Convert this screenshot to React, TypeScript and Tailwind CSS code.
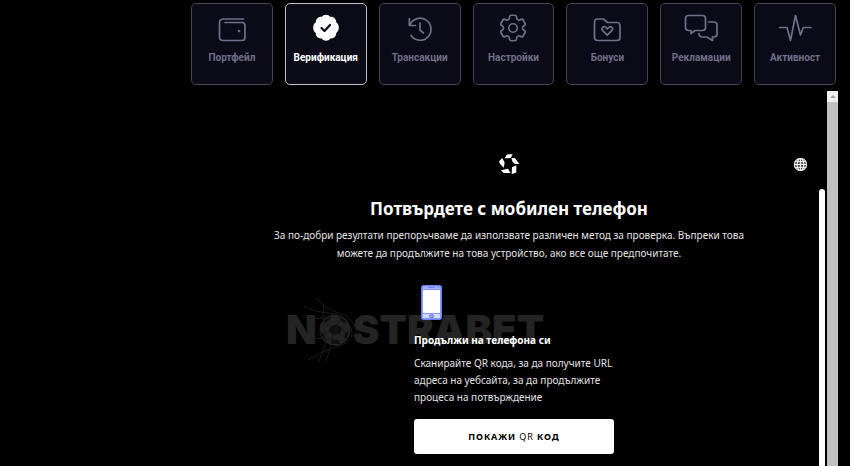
import { ReactNode } from "react";
import { clsx } from "clsx";
import { BsGlobe } from "react-icons/bs";
import { HiOutlineCog6Tooth } from "react-icons/hi2";

function StrokeIcon({ children }: { children: ReactNode }) {
  return (
    <svg
      viewBox="0 0 34 28"
      className="h-7 w-[34px]"
      fill="none"
      stroke="currentColor"
      strokeWidth="1.7"
      strokeLinecap="round"
      strokeLinejoin="round"
      aria-hidden="true"
    >
      {children}
    </svg>
  );
}

const tabs: { label: string; icon: ReactNode }[] = [
  {
    label: "Портфейл",
    icon: (
      <StrokeIcon>
        <path d="M28.5 5H8.5Q4.5 5 4.5 9V23Q4.5 26.5 8 26.5H27Q30 26.5 30 23.5V11.5Q30 8.5 27 8.5H10" />
        <circle cx="24" cy="17" r="0.5" fill="currentColor" />
      </StrokeIcon>
    ),
  },
  {
    label: "Верификация",
    icon: (
      <StrokeIcon>
        <path
          fill="currentColor"
          stroke="none"
          d="M17 .7C18.8.7 20.3 1.6 21.2 2.9 24 2.4 27.3 4.6 27.2 8.3 30.7 10.3 30.7 17.1 27.2 19.1 27.3 22.8 24.5 25 21.2 24.5 19.3 27.4 14.7 27.4 12.8 24.5 9.5 25 6.7 22.8 6.8 19.1 3.3 17.1 3.3 10.3 6.8 8.3 6.7 4.6 10 2.4 12.8 2.9 13.7 1.6 15.2.7 17 .7Z"
        />
        <path d="M12.5 14L15.5 17L21 11" stroke="#0a0b17" strokeWidth="2.2" />
      </StrokeIcon>
    ),
  },
  {
    label: "Трансакции",
    icon: (
      <StrokeIcon>
        <path d="M6.3 4.5V11.5H12.5M6.7 11.5A11 11 0 1 1 8 21.5M17 9V16L20.5 19" />
      </StrokeIcon>
    ),
  },
  {
    label: "Настройки",
    icon: <HiOutlineCog6Tooth className="-my-[3px] size-[34px] [&_path]:stroke-[1.2]" aria-hidden="true" />,
  },
  {
    label: "Бонуси",
    icon: (
      <StrokeIcon>
        <path d="M4.5 8Q4.5 5 7.5 5H13.5L17.5 8.5H27Q30 8.5 30 11.5V23.5Q30 26.5 27 26.5H7.5Q4.5 26.5 4.5 23.5Z" />
        <path d="M17.3 21.2L12.6 16.4C10.8 14.3 13.8 11.6 15.7 13.4L17.3 15L18.9 13.4C20.8 11.6 23.8 14.3 22 16.4Z" />
      </StrokeIcon>
    ),
  },
  {
    label: "Рекламации",
    icon: (
      <StrokeIcon>
        <path d="M4.5 1.5H18.5Q21.5 1.5 21.5 4.5V13.5Q21.5 16.5 18.5 16.5H11L7 19.5V16.5H4.5Q1.5 16.5 1.5 13.5V4.5Q1.5 1.5 4.5 1.5Z" />
        <path d="M24.5 8H30Q33 8 33 11V20Q33 23 30 23H28.5V26.5L23 23H18Q15 23 15 19.5" />
      </StrokeIcon>
    ),
  },
  {
    label: "Активност",
    icon: (
      <StrokeIcon>
        <path d="M1.5 13.5H9L12.5 26.3L17.5 1.5L22.5 21L25.3 13.5H33" />
      </StrokeIcon>
    ),
  },
];

function ProfileTabs({ active }: { active: string }) {
  return (
    <nav className="grid grid-cols-7 gap-3 pt-[3px] pr-3.5 pl-[191px] font-['Roboto',sans-serif]">
      {tabs.map(({ label, icon }) => (
        <button
          key={label}
          type="button"
          className={clsx(
            "flex h-[82px] flex-col items-center gap-2 rounded-[5px] border bg-[#0a0b17] pt-2.5 text-[10px] leading-4 font-bold",
            label === active ? "border-[#c4c4c8] text-white" : "border-[#454354] text-[#716e88]"
          )}
        >
          {icon}
          {label}
        </button>
      ))}
    </nav>
  );
}

function StarLogo() {
  return (
    <svg viewBox="53 23 66 66" className="size-[22px]" fill="currentColor" aria-hidden="true">
      <path d="M73 39L79 29Q81 27 84 27H97L91 38L81 39Z" />
      <path d="M93 38H101Q104 38 106 41L117 56L104 56L97 50Z" />
      <path d="M95 66L108 60V79Q108 82 105 83L94 86Z" />
      <path d="M62 75L83 70L91 83H71Q69 83 67 81Z" />
      <path d="M66 38L73 52L70 67L59 55Q57 53 57 51V47Z" />
    </svg>
  );
}

function PhoneIcon() {
  return (
    <svg viewBox="0 0 21 35" className="h-[35px] w-[21px]" aria-hidden="true">
      <rect x="0.75" y="0.75" width="19.5" height="33.5" rx="2" fill="#a6b5ff" stroke="#6c82f5" strokeWidth="1.5" />
      <rect x="2" y="4.5" width="17" height="23.5" fill="#fff" />
      <path d="M1 4.5H20M1 28.5H20" stroke="#8495fa" />
      <path d="M7.5 2.5H13.5M17 2.5H18" stroke="#6c82f5" />
      <rect x="2" y="29" width="17" height="4" fill="#d3dcff" />
      <ellipse cx="10.5" cy="31.3" rx="2.2" ry="1.5" fill="#a6b5ff" stroke="#526bea" />
    </svg>
  );
}

function Watermark() {
  return (
    <div
      className="absolute top-[38px] -left-[128px] -z-10 flex items-center font-['Inter',sans-serif] text-[40px] leading-[60px] font-black text-[#242424]"
      aria-hidden="true"
    >
      N
      <svg viewBox="0 0 32 32" className="mx-0.5 size-8 overflow-visible" fill="none">
        <circle cx="16" cy="16" r="15.5" fill="#242424" />
        <path
          fill="#101010"
          d="M12 12L18 10L23 14L21 20L14 21L10 17ZM5 6L12 2L11 6L6 9ZM20 2L27 6L26 10L21 6ZM1 17L5 20L6 26L2 22ZM30 17L28 25L25 24L26 19ZM12 26L20 26L21 30L13 30Z"
        />
        <path
          stroke="#151515"
          strokeWidth="0.7"
          d="M12 12L6 9M18 10L21 6M23 14L26 19M21 20L25 24M14 21L12 26M10 17L5 20"
        />
        <path
          stroke="#1b1b1b"
          d="M-15 -8Q-5 -2 10 -1T32 14Q37 27 20 32T-11 46M-3 -16Q7 -4 20 -1T38 18M-17 2Q-9 6 6 4M-9 25Q5 24 16 25M5 -9Q3 9 6 19T-1 49M24 0Q15 16 12 29T7 48"
        />
      </svg>
      STRABET
    </div>
  );
}

function VerificationPanel() {
  return (
    <main className="relative isolate flex flex-1 flex-col items-center pt-[62px] font-['Noto_Sans',sans-serif] text-white">
      <StarLogo />
      <button type="button" aria-label="Език" className="absolute top-[67px] right-5">
        <BsGlobe className="size-[13px] stroke-[0.6]" />
      </button>
      <h1 className="mt-[22px] text-[17px] leading-6 font-bold">Потвърдете с мобилен телефон</h1>
      <p className="mt-[5px] max-w-[480px] text-center text-[10px] leading-[18px] text-[#e2e2e2]">
        За по-добри резултати препоръчваме да използвате различен метод за проверка. Въпреки това можете да
        продължите на това устройство, ако все още предпочитате.
      </p>
      <section className="relative ml-2.5 flex w-[200px] flex-col pt-[23px]">
        <Watermark />
        <div className="pl-[7px]">
          <PhoneIcon />
        </div>
        <h2 className="mt-[11px] text-[10px] leading-[18px] font-bold">Продължи на телефона си</h2>
        <p className="mt-1.5 text-[10px] leading-[17px] text-[#e2e2e2]">
          Сканирайте QR кода, за да получите URL адреса на уебсайта, за да продължите процеса на потвърждение
        </p>
        <button
          type="button"
          className="mt-[13px] h-[35px] rounded-[3px] bg-white text-[9px] font-bold tracking-widest text-black"
        >
          ПОКАЖИ <span className="font-normal">QR</span> КОД
        </button>
      </section>
    </main>
  );
}

export default function App() {
  return (
    <div className="flex min-h-screen flex-col bg-black">
      <ProfileTabs active="Верификация" />
      <div className="mt-1.5 flex flex-1 pr-3 pl-[191px]">
        <VerificationPanel />
        <div className="-ml-2 mt-[98px] w-1.5 rounded-t-full bg-white" />
        <div className="ml-0.5 flex w-[11px] flex-col bg-[#c1c1c1]">
          <div className="flex h-[11px] items-center justify-center bg-[#f1f1f1]">
            <svg viewBox="0 0 6 3" className="h-[3px] w-1.5" fill="#a3a3a3" aria-hidden="true">
              <path d="M3 0L6 3H0Z" />
            </svg>
          </div>
        </div>
      </div>
    </div>
  );
}
